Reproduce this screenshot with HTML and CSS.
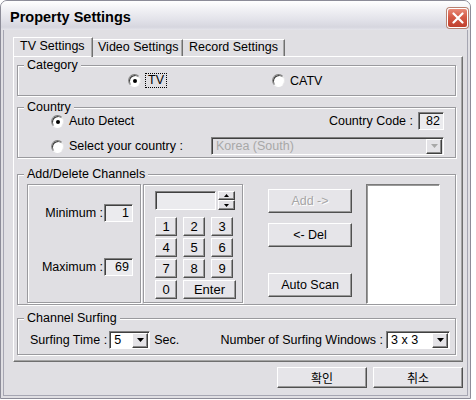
FILE: index.html
```html
<!DOCTYPE html>
<html>
<head>
<meta charset="utf-8">
<link rel="stylesheet" href="styles.css">
</head>
<body>
<div class="window">
  <div class="titlebar">
    <span class="title">Property Settings</span>
    <span class="close">
      <svg width="12" height="12" viewBox="0 0 12 12"><path d="M1.5 1.5L10.5 10.5M10.5 1.5L1.5 10.5" stroke="#fff" stroke-width="2.2" stroke-linecap="round"/></svg>
    </span>
  </div>
  <div class="client">
    <div class="tabs">
      <div class="tab tab-tv active">TV Settings</div>
      <div class="tab tab-video">Video Settings</div>
      <div class="tab tab-record">Record Settings</div>
    </div>
    <div class="panel">
      <div class="group g-category">
        <span class="legend">Category</span>
        <div class="cat-row">
          <span class="radio radio-tv"><span class="dot checked"></span><span class="focus">TV</span></span>
          <span class="radio"><span class="dot"></span><span class="rlabel">CATV</span></span>
        </div>
      </div>

      <div class="group g-country">
        <span class="legend">Country</span>
        <div class="c-row">
          <span class="radio"><span class="dot checked"></span><span class="rlabel">Auto Detect</span></span>
          <span class="c-code">Country Code :</span>
          <span class="field code-box">82</span>
        </div>
        <div class="c-row row2">
          <span class="radio radio-sel"><span class="dot"></span><span class="rlabel">Select your country :</span></span>
          <span class="combo combo-country disabled">
            <span class="combo-text">Korea (South)</span>
            <span class="combo-btn"><svg width="7" height="4" viewBox="0 0 7 4"><path d="M0 0H7L3.5 4Z" fill="#a8a8a8"/></svg></span>
          </span>
        </div>
      </div>

      <div class="group g-channels">
        <span class="legend">Add/Delete Channels</span>
        <div class="ch-row">
          <div class="etched minmax">
            <div class="mm-row"><span>Minimum :</span><span class="field mm-box">1</span></div>
            <div class="mm-row"><span>Maximum :</span><span class="field mm-box">69</span></div>
          </div>
          <div class="etched numpad">
            <div class="np-top">
              <span class="field np-edit"></span>
              <span class="spin">
                <span class="spin-btn"><svg width="5" height="3" viewBox="0 0 5 3"><path d="M0 3H5L2.5 0Z"/></svg></span>
                <span class="spin-btn"><svg width="5" height="3" viewBox="0 0 5 3"><path d="M0 0H5L2.5 3Z"/></svg></span>
              </span>
            </div>
            <div class="keys">
              <span class="btn key">1</span><span class="btn key">2</span><span class="btn key">3</span>
              <span class="btn key">4</span><span class="btn key">5</span><span class="btn key">6</span>
              <span class="btn key">7</span><span class="btn key">8</span><span class="btn key">9</span>
              <span class="btn key">0</span><span class="btn key enter">Enter</span>
            </div>
          </div>
          <div class="actions">
            <span class="btn act act-add disabled">Add -&gt;</span>
            <span class="btn act act-del">&lt;- Del</span>
            <span class="btn act act-scan">Auto Scan</span>
          </div>
          <div class="listbox"></div>
        </div>
      </div>

      <div class="group g-surf">
        <span class="legend">Channel Surfing</span>
        <div class="s-row">
          <span>Surfing Time :</span>
          <span class="combo combo-time">
            <span class="combo-text">5</span>
            <span class="combo-btn"><svg width="7" height="4" viewBox="0 0 7 4"><path d="M0 0H7L3.5 4Z"/></svg></span>
          </span>
          <span class="sec">Sec.</span>
          <span class="s-right">Number of Surfing Windows :</span>
          <span class="combo combo-win">
            <span class="combo-text">3 x 3</span>
            <span class="combo-btn"><svg width="7" height="4" viewBox="0 0 7 4"><path d="M0 0H7L3.5 4Z"/></svg></span>
          </span>
        </div>
      </div>
    </div>
    <div class="footer">
      <span class="btn foot-btn">확인</span>
      <span class="btn foot-btn">취소</span>
    </div>
  </div>
</div>
</body>
</html>
```
FILE: styles.css
```css
* { box-sizing: border-box; }
html, body { margin: 0; padding: 0; background: #ffffff; }
body {
  width: 476px; height: 400px; overflow: hidden;
  font-family: "Liberation Sans", Arial, "Noto Sans CJK KR", sans-serif;
  font-size: 12.5px; color: #000;
}
.window {
  width: 471px; height: 399px;
  border: 1px solid #8c8c98;
  border-radius: 7px 7px 0 0;
  background: #e0dfe3;
  display: flex; flex-direction: column;
}
.titlebar {
  height: 29px; flex: none;
  display: flex; align-items: flex-start;
  border-radius: 6px 6px 0 0;
  background: linear-gradient(to bottom, #ffffff 0%, #f3f3f6 25%, #e2e2e9 65%, #d6d6df 90%, #e4e4ea 100%);
}
.title {
  font-weight: bold; font-size: 14.5px;
  padding-left: 9px; margin-top: 8px; line-height: 17px;
  flex: 1;
}
.close {
  width: 21px; height: 20px; margin-top: 7px; margin-right: 2px;
  border-radius: 3px;
  border: 1px solid #ffffff;
  background: linear-gradient(to bottom, #e88a78 0%, #d45a46 45%, #c0402e 100%);
  box-shadow: 0 0 0 1px #b6806f;
  display: flex; align-items: center; justify-content: center;
}
.client {
  flex: 1;
  margin: 0 2px 2px 2px;
  border: 1px solid #a6a6b2; border-top: none;
  display: flex; flex-direction: column;
}
.tabs {
  display: flex; margin-top: 7px; margin-left: 9px; height: 19px;
  position: relative; z-index: 1;
}
.tab {
  height: 17px; margin-top: 2px;
  border-top: 1px solid #ffffff; border-left: 1px solid #ffffff;
  border-right: 1px solid #707070;
  box-shadow: inset -1px 0 0 #a8a8a8;
  line-height: 15px; padding-left: 6px;
}
.tab.active { height: 20px; margin-top: 0; line-height: 17px; }
.tab-tv { width: 80px; }
.tab-video { width: 90px; border-left: none; padding-left: 5px; }
.tab-record { width: 102px; border-left: none; padding-left: 6px; }
.panel {
  width: 450px; height: 306px; margin-left: 9px;
  border: 1px solid; border-color: #ffffff #6f6f6f #6f6f6f #ffffff;
  box-shadow: inset -1px -1px 0 #a4a4a4;
  padding: 0 0 0 3px;
  display: flex; flex-direction: column;
}
.group {
  position: relative;
  width: 439px;
  border: 1px solid #9a9a9e;
  box-shadow: inset 1px 1px 0 #ffffff, 1px 1px 0 #ffffff;
}
.legend {
  position: absolute; top: -8px; left: 6px;
  padding: 0 3px; line-height: 14px;
  background: #e0dfe3;
}
.g-category { margin-top: 8px; height: 31px; }
.g-country { margin-top: 11px; height: 51px; padding: 4px 11px 0 33px; }
.g-channels { margin-top: 16px; height: 131px; padding: 9px 0 0 9px; }
.g-surf { margin-top: 13px; height: 37px; padding: 12px 5px 0 12px; }

.radio { display: flex; align-items: center; }
.dot {
  width: 13px; height: 13px; border-radius: 50%;
  background: #ffffff;
  border: 1px solid; border-color: #7a7a7a #e8e8e8 #ffffff #8a8a8a;
  box-shadow: inset 1px 1px 0 #404040;
  display: flex; align-items: center; justify-content: center;
  flex: none;
}
.dot.checked::after {
  content: ""; width: 4px; height: 4px; border-radius: 50%; background: #000;
  margin: 1px 0 0 1px;
}
.rlabel { margin-left: 5px; line-height: 14px; }
.focus { margin-left: 4px; border: 1px dotted #000; padding: 0 2px; line-height: 13px; }

.cat-row { display: flex; align-items: center; height: 100%; padding-left: 110px; }
.radio-tv { width: 144px; }

.c-row { display: flex; align-items: center; height: 18px; }
.row2 { margin-top: 7px; }
.c-code { margin-left: auto; margin-right: 5px; }
.field {
  height: 18px;
  border: 1px solid; border-color: #808080 #ffffff #ffffff #808080;
  box-shadow: inset 1px 1px 0 #404040;
  background: #ebebee;
  display: flex; align-items: center; justify-content: flex-end;
  padding-right: 3px; line-height: 14px;
}
.code-box { width: 26px; }
.radio-sel { width: 160px; }
.combo {
  height: 18px;
  border: 1px solid; border-color: #808080 #ffffff #ffffff #808080;
  box-shadow: inset 1px 1px 0 #404040;
  background: #ffffff;
  display: flex; align-items: center;
  padding: 1px 1px 1px 4px;
}
.combo.disabled { background: #e0dfe3; color: #a8a8a8; }
.combo-text { flex: 1; line-height: 14px; }
.combo-btn {
  width: 16px; height: 15px; flex: none;
  background: #e4e3e7;
  border: 1px solid; border-color: #ffffff #404040 #404040 #ffffff;
  box-shadow: inset -1px -1px 0 #8a8a8a;
  display: flex; align-items: center; justify-content: center;
}
.combo-country { width: 233px; }

.ch-row { display: flex; align-items: flex-start; }
.etched {
  height: 119px;
  border: 1px solid #9a9a9e;
  box-shadow: inset 1px 1px 0 #ffffff, 1px 1px 0 #ffffff;
}
.minmax {
  width: 114px;
  display: flex; flex-direction: column; justify-content: space-between; align-items: flex-end;
  padding: 19px 7px 26px 0;
}
.mm-row { display: flex; align-items: center; height: 18px; }
.mm-box { width: 29px; margin-left: 1px; }
.numpad { width: 100px; margin-left: 2px; padding: 6px 0 0 11px; }
.np-top { display: flex; height: 19px; }
.np-edit { width: 61px; height: 19px; }
.spin { display: flex; flex-direction: column; margin-left: 2px; }
.spin-btn {
  width: 17px; height: 9px;
  background: #e4e3e7;
  border: 1px solid; border-color: #ffffff #404040 #404040 #ffffff;
  box-shadow: inset -1px -1px 0 #8a8a8a;
  display: flex; align-items: center; justify-content: center;
}
.spin-btn + .spin-btn { height: 10px; }
.keys {
  display: grid; grid-template-columns: 22px 22px 22px; column-gap: 6px; row-gap: 2px;
  margin-top: 7px;
}
.btn {
  display: flex; align-items: center; justify-content: center;
  background: #e6e5e9;
  border: 1px solid; border-color: #ffffff #505050 #505050 #ffffff;
  box-shadow: inset -1px -1px 0 #9a9a9a;
  line-height: 14px;
}
.key { height: 19px; font-size: 13px; }
.enter { grid-column: 2 / span 2; width: 53px; }
.actions { display: flex; flex-direction: column; margin-left: 25px; padding-top: 5px; }
.act { width: 84px; height: 24px; }
.act-del { margin-top: 10px; }
.act-scan { margin-top: 26px; }
.btn.disabled { color: #a6a6a6; text-shadow: 1px 1px 0 #ffffff; }
.listbox {
  width: 74px; height: 120px; margin-left: 14px;
  background: #ffffff;
  border: 1px solid; border-color: #7a7a7a #ffffff #ffffff #7a7a7a;
  box-shadow: inset 1px 1px 0 #9a9a9a;
}
.s-row { display: flex; align-items: center; height: 18px; }
.combo-time { width: 41px; margin-left: 2px; }
.sec { margin-left: 4px; }
.s-right { margin-left: auto; margin-right: 3px; }
.combo-win { width: 64px; }
.footer { display: flex; justify-content: flex-end; gap: 6px; margin-top: 5px; width: 459px; }
.foot-btn { width: 90px; height: 21px; font-family: "Noto Sans CJK KR", sans-serif; font-size: 12px; }
```
